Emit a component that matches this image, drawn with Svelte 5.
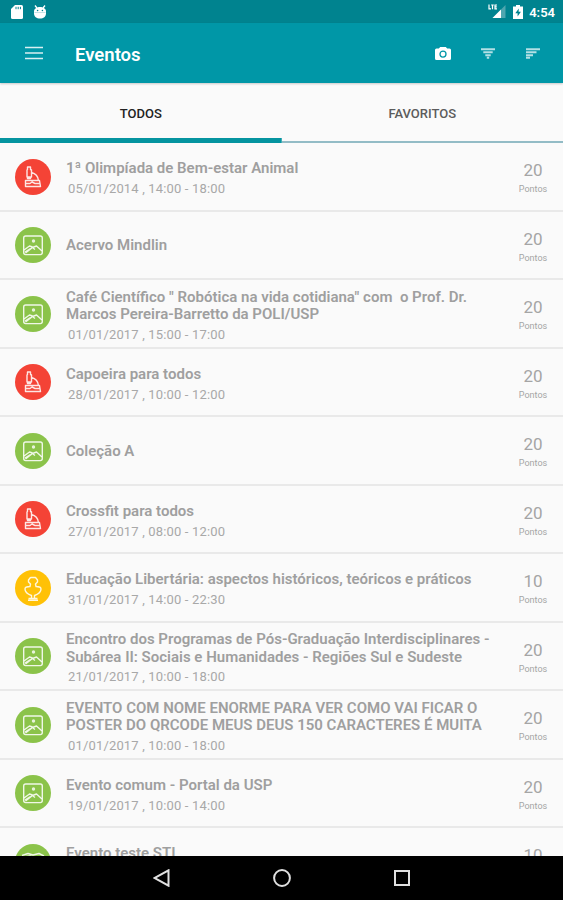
<script lang="ts">
    type Kind = 'science' | 'picture' | 'culture' | 'other';

    interface EventItem {
        kind: Kind;
        title: string[];
        date?: string;
        points: number;
    }

    let active = $state(0);
    const tabs = ['TODOS', 'FAVORITOS'];

    const events: EventItem[] = [
        { kind: 'science', title: ['1ª Olimpíada de Bem-estar Animal'], date: '05/01/2014 , 14:00 - 18:00', points: 20 },
        { kind: 'picture', title: ['Acervo Mindlin'], points: 20 },
        {
            kind: 'picture',
            title: ['Café Científico " Robótica na vida cotidiana" com  o Prof. Dr.', 'Marcos Pereira-Barretto da POLI/USP'],
            date: '01/01/2017 , 15:00 - 17:00',
            points: 20
        },
        { kind: 'science', title: ['Capoeira para todos'], date: '28/01/2017 , 10:00 - 12:00', points: 20 },
        { kind: 'picture', title: ['Coleção A'], points: 20 },
        { kind: 'science', title: ['Crossfit para todos'], date: '27/01/2017 , 08:00 - 12:00', points: 20 },
        {
            kind: 'culture',
            title: ['Educação Libertária: aspectos históricos, teóricos e práticos'],
            date: '31/01/2017 , 14:00 - 22:30',
            points: 10
        },
        {
            kind: 'picture',
            title: ['Encontro dos Programas de Pós-Graduação Interdisciplinares -', 'Subárea II: Sociais e Humanidades - Regiões Sul e Sudeste'],
            date: '21/01/2017 , 10:00 - 18:00',
            points: 20
        },
        {
            kind: 'picture',
            title: ['EVENTO COM NOME ENORME PARA VER COMO VAI FICAR O', 'POSTER DO QRCODE MEUS DEUS 150 CARACTERES É MUITA'],
            date: '01/01/2017 , 10:00 - 18:00',
            points: 20
        },
        { kind: 'picture', title: ['Evento comum - Portal da USP'], date: '19/01/2017 , 10:00 - 14:00', points: 20 },
        { kind: 'other', title: ['Evento teste STI'], date: '19/01/2017 , 10:00 - 14:00', points: 10 }
    ];
</script>

<div class="screen">
    <div class="status">
        <svg width="12" height="14" viewBox="0 0 12 14"><path d="M4 0h6.500q1.500 0 1.500 1.500v11q0 1.500-1.500 1.500h-9Q0 14 0 12.500V4z" fill="#fff" /><path d="M5 1.800v2.400M7.200 1.800v2.400M9.400 1.800v2.400" stroke="#00838f" /></svg>
        <svg class="droid" width="14" height="14" viewBox="0 0 14 14">
            <path d="M2 .5 4 3M12 .5 10 3" stroke="#fff" stroke-width="1.300" />
            <path d="M1 6.500C1 3.500 4 2 7 2s6 1.500 6 4.500v2C13 11.500 10.500 13.500 7 13.500S1 11.500 1 8.500z" fill="#fff" />
            <circle cx="4.600" cy="5.500" r=".8" fill="#00838f" /><circle cx="9.400" cy="5.500" r=".8" fill="#00838f" />
            <path d="M1.500 7.500h11" stroke="#9fd0d5" stroke-width=".6" />
        </svg>
        <span class="grow"></span>
        <svg class="signal" width="18" height="15" viewBox="0 0 18 15">
            <path d="M17.500 1v13H4.500z" fill="#4fa6af" /><path d="M13 5.500V14H4.500z" fill="#fff" />
            <path d="M1 .5v4.300h2M3.200 1h2.600M4.500 1v4.300M9 1H7v3.800h2M7 2.900h1.800" fill="none" stroke="#fff" stroke-width="1.200" />
        </svg>
        <svg class="battery" width="10" height="14" viewBox="0 0 10 14"><path d="M3 0h4v1.500h3V14H0V1.500h3z" fill="#fff" /><path d="M5.800 3.500 2.300 8.300h2.300v3.200l3.300-4.700H5.600z" fill="#00838f" /></svg>
        <span class="time">4:54</span>
    </div>

    <header>
        <svg width="18" height="14" viewBox="0 0 18 14"><path d="M0 1.500h18M0 7h18M0 12.500h18" stroke="#d9f0f2" stroke-width="1.600" /></svg>
        <h1>Eventos</h1>
        <svg class="camera" width="16" height="13" viewBox="0 0 16 13">
            <path d="M5.200 0h5.600l1.400 1.500H14.500q1.500 0 1.500 1.500v8.500q0 1.500-1.500 1.500h-13Q0 13 0 11.500V3q0-1.500 1.500-1.500h2.300z" fill="#fff" />
            <circle cx="8" cy="7.100" r="3" fill="none" stroke="#0097a7" stroke-width="1.300" />
        </svg>
        <svg class="filter" width="14" height="11" viewBox="0 0 14 11"><path d="M0 1.200h14M2.300 4.200h9.400M4.300 7.200h5.400M5.800 9.800h2.400" stroke="#b3e0e5" stroke-width="2.100" /></svg>
        <svg class="sort" width="14" height="11" viewBox="0 0 14 11"><path d="M0 1.200h14M0 4.200h10.500M0 7.200h7M0 9.800h4" stroke="#b3e0e5" stroke-width="2.100" /></svg>
    </header>

    <nav>
        {#each tabs as tab, i}
            <button class:active={active === i} onclick={() => (active = i)}>{tab}</button>
        {/each}
    </nav>

    <ul>
        {#each events as event}
            <li>
                <svg class="icon {event.kind}" width="36" height="36" viewBox="0 0 36 36">
                    <circle cx="18" cy="18" r="18" />
                    {#if event.kind === 'science'}
                        <path d="M12.500 8h3v2.500l1 .5v7h-4.500v-7l.5-.5zM12.500 18v1.500h3V18M16.500 13.500c4 1 6.500 4 7 8M10.500 21.500h14l1 6h-15zM11 24.500h4l2-1.500 3 1.500h5" />
                    {:else if event.kind === 'picture'}
                        <rect x="8.700" y="9" width="18.600" height="18.600" rx="2" />
                        <circle class="sun" cx="18.500" cy="14" r="1.700" />
                        <path d="M9 23l5.500-4 3 1M10.500 26l7-5.500 4-1.500 5.500 5M10 25l5.500-3.500M18 21l2 1.500" />
                    {:else if event.kind === 'culture'}
                        <path d="M15.500 7.500h5l2 2.500v2l-2 2 .5 2.500c2.500 0 5 1 5 2.500 0 3-3.500 5.500-6.500 6.500v3M15.500 7.500l-2 2.500v2l2 2-.5 2.500c-2.500 0-5 1-5 2.500 0 3 3.500 5.500 6.500 6.500v3M13.500 28.500h9M13 30.300h10" />
                    {:else}
                        <path d="M7 11.500l6-2 5 1.500 6-1.500 5 2.500M8 13l7-1 5 2 8-.5M13 14.500l7 2" />
                    {/if}
                </svg>
                <div class="info">
                    {#each event.title as line}
                        <strong>{line}</strong>
                    {/each}
                    {#if event.date}
                        <span class="date">{event.date}</span>
                    {/if}
                </div>
                <div class="points">
                    <span class="number">{event.points}</span>
                    <span class="unit">Pontos</span>
                </div>
            </li>
        {/each}
    </ul>

    <footer>
        <svg width="18" height="18" viewBox="0 0 18 18"><path d="M15.500 1.300v15.400L1.800 9z" /></svg>
        <svg width="18" height="18" viewBox="0 0 18 18"><circle cx="9" cy="9" r="7.900" /></svg>
        <svg width="18" height="18" viewBox="0 0 18 18"><path d="M2 2h14v14H2z" /></svg>
    </footer>
</div>

<style>
    :global(body) {
        margin: 0;
    }
    .screen {
        width: 563px;
        height: 900px;
        display: flex;
        flex-direction: column;
        overflow: hidden;
        background: #fafafa;
        font-family: Roboto, 'Liberation Sans', sans-serif;
    }
    svg {
        flex: none;
    }
    .status {
        height: 23px;
        flex: none;
        display: flex;
        align-items: center;
        padding: 0 8px 0 11px;
        box-sizing: border-box;
        background: #00838f;
    }
    .droid {
        margin-left: 10px;
    }
    .grow {
        flex: 1;
    }
    .signal {
        margin-right: 7px;
    }
    .battery {
        margin-right: 6px;
    }
    .time {
        color: #fff;
        font-size: 13px;
        font-weight: 600;
        line-height: 23px;
        padding-top: 2px;
    }
    header {
        height: 60px;
        flex: none;
        display: flex;
        align-items: center;
        padding: 0 23px 0 25px;
        box-sizing: border-box;
        background: #0097a7;
        box-shadow: 0 1px 2px #0003;
        z-index: 1;
    }
    h1 {
        flex: 1;
        margin: 3px 0 0 32px;
        color: #fff;
        font-size: 18.500px;
        font-weight: 600;
    }
    .camera {
        margin-right: 30px;
    }
    .filter {
        margin-right: 31px;
    }
    nav {
        height: 60px;
        flex: none;
        display: flex;
    }
    button {
        flex: 1;
        padding: 1px 0 0;
        border: 0;
        background: linear-gradient(#93bcc6, #93bcc6) bottom / 100% 2px no-repeat;
        color: #5c5c5c;
        font: 500 13px Roboto, 'Liberation Sans', sans-serif;
        cursor: pointer;
    }
    button.active {
        color: #222;
        background: linear-gradient(#0594a0, #0594a0) bottom / 100% 5.500px no-repeat;
    }
    ul {
        flex: 1;
        min-height: 0;
        overflow: hidden;
        margin: 0;
        padding: 0;
        list-style: none;
    }
    li {
        height: 68.500px;
        display: flex;
        align-items: center;
        box-sizing: border-box;
        border-bottom: 2px solid #e9e9e9;
        padding: 1px 15px 0;
    }
    .icon {
        fill: none;
        stroke: #fffd;
        stroke-width: 1.400;
        stroke-linejoin: round;
    }
    .icon > circle:first-child {
        stroke: none;
        fill: #8bc34a;
    }
    .icon.science > circle:first-child {
        fill: #f44336;
    }
    .icon.culture > circle:first-child {
        fill: #ffc107;
    }
    .icon .sun {
        fill: #fffc;
        stroke: none;
    }
    .info {
        flex: 1;
        margin-left: 15px;
        padding-top: 2px;
        display: flex;
        flex-direction: column;
        white-space: pre;
    }
    strong {
        color: #9f9f9f;
        font-size: 15px;
        font-weight: 600;
        line-height: 17.700px;
    }
    .date {
        margin: 5px 0 0 2px;
        color: #a8a8a8;
        font-size: 13px;
        line-height: 12px;
        letter-spacing: 0.160px;
    }
    .points {
        width: 30px;
        padding-top: 2px;
        display: flex;
        flex-direction: column;
        align-items: center;
        color: #a5a5a5;
    }
    .number {
        font-size: 17px;
        line-height: 20px;
    }
    .unit {
        font-size: 9px;
        line-height: 12px;
        margin-top: 3px;
    }
    footer {
        height: 44px;
        flex: none;
        display: flex;
        align-items: center;
        justify-content: center;
        gap: 102px;
        background: #000;
        fill: none;
        stroke: #e0e0e0;
        stroke-width: 2;
    }
</style>
